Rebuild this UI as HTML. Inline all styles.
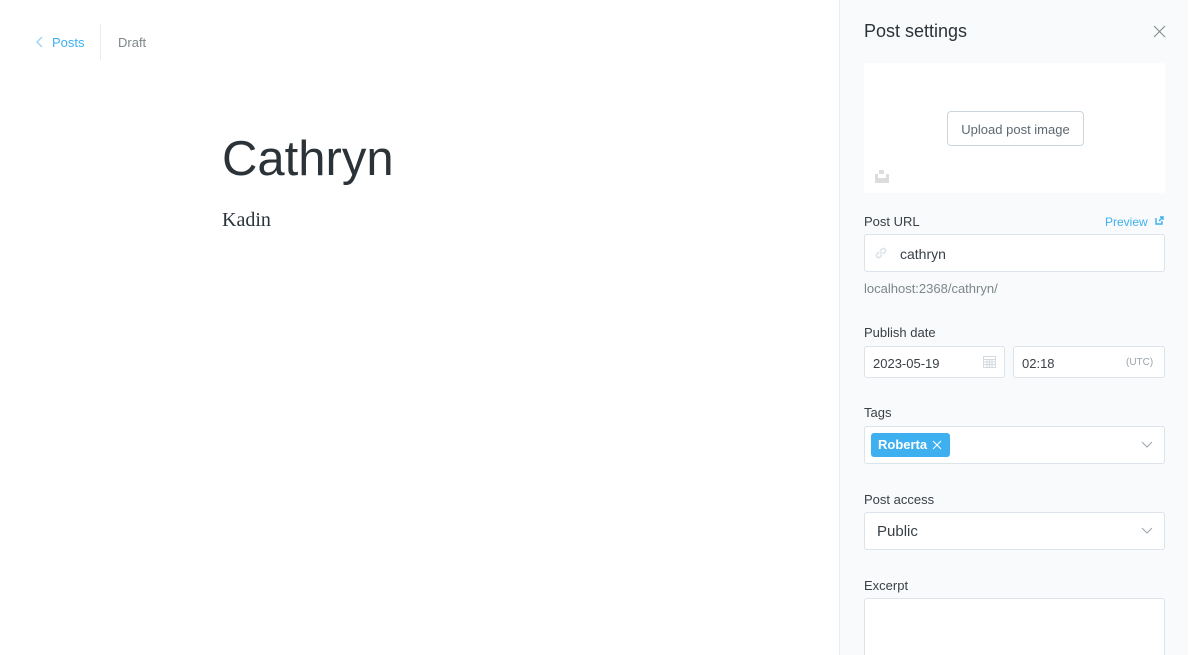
<!DOCTYPE html>
<html><head><meta charset="utf-8"><style>
*{box-sizing:border-box;margin:0;padding:0}
html,body{width:1203px;height:655px;overflow:hidden}
body{background:#fff;font-family:"Liberation Sans","DejaVu Sans",sans-serif;position:relative;color:#394047}
.a{position:absolute}
.lbl{font-size:13px;color:#394047;font-weight:normal}
.inp{background:#fff;border:1px solid #dde3ea;border-radius:3px}
</style></head><body>
<svg class="a" style="left:35px;top:36px" width="10" height="12" viewBox="0 0 10 12"><path d="M7 1L2 6l5 5" fill="none" stroke="#8ccdf2" stroke-width="1.2"/></svg>
<div class="a" style="left:52px;top:35px;font-size:13px;color:#3eb0ef">Posts</div>
<div class="a" style="left:100px;top:24px;width:1px;height:36px;background:#e6ecf1"></div>
<div class="a" style="left:118px;top:35px;font-size:13px;color:#7d878a">Draft</div>
<div class="a" style="left:222px;top:131px;font-size:49px;color:#2b3339">Cathryn</div>
<div class="a" style="left:222px;top:209px;font-size:20px;font-family:'Liberation Serif',serif;color:#2b3339">Kadin</div>

<div class="a" style="left:839px;top:0;width:349px;height:655px;background:#f8fafb;border-left:1px solid #e8edf1"></div>
<div class="a" style="left:864px;top:21px;font-size:18px;color:#2b3339">Post settings</div>
<svg class="a" style="left:1153px;top:25px" width="13" height="13" viewBox="0 0 13 13"><path d="M1 1l11 11M12 1L1 12" stroke="#7d878a" stroke-width="1"/></svg>
<div class="a" style="left:864px;top:63px;width:301px;height:130px;background:#fff;border-radius:3px"></div>
<div class="a" style="left:947px;top:111px;width:137px;height:35px;border:1px solid #ccd5dd;border-radius:4px;background:#fff;font-size:13px;color:#5d6870;text-align:center;line-height:35px">Upload post image</div>
<div class="a" style="left:875px;top:174px;width:14px;height:9px;background:#dcdcdc"></div>
<div class="a" style="left:879px;top:170px;width:5px;height:5px;background:#dcdcdc"></div>
<div class="a" style="left:878px;top:174px;width:8px;height:4px;background:#fff"></div>

<div class="a lbl" style="left:864px;top:214px">Post URL</div>
<div class="a" style="left:1105px;top:215px;font-size:12px;color:#3eb0ef">Preview</div>
<svg class="a" style="left:1155px;top:216px" width="9" height="9" viewBox="0 0 9 9"><path d="M1 2v6h6V5M4 5l4-4M5 1h3v3" fill="none" stroke="#3eb0ef" stroke-width="1.4"/></svg>
<div class="a inp" style="left:864px;top:234px;width:301px;height:38px"></div>
<svg class="a" style="left:874px;top:246px" width="14" height="14" viewBox="0 0 14 14"><path d="M6 8l2-2M5 6L3 8a2 2 0 0 0 3 3l2-2M9 8l2-2a2 2 0 0 0-3-3L6 5" fill="none" stroke="#dde3ea" stroke-width="1.6"/></svg>
<div class="a" style="left:900px;top:246px;font-size:14px;color:#394047">cathryn</div>
<div class="a" style="left:864px;top:281px;font-size:13px;color:#7d878a">localhost:2368/cathryn/</div>

<div class="a lbl" style="left:864px;top:325px">Publish date</div>
<div class="a inp" style="left:864px;top:346px;width:141px;height:32px"></div>
<div class="a" style="left:873px;top:356px;font-size:13px;color:#394047">2023-05-19</div>
<svg class="a" style="left:983px;top:355px" width="13" height="13" viewBox="0 0 13 13"><rect x="0.5" y="1.5" width="12" height="11" fill="none" stroke="#d5dadf"/><path d="M1 4.5h11M1 7h11M1 9.5h11M4 4v8M6.5 4v8M9 4v8" stroke="#d5dadf"/></svg>
<div class="a inp" style="left:1013px;top:346px;width:152px;height:32px"></div>
<div class="a" style="left:1022px;top:356px;font-size:13px;color:#394047">02:18</div>
<div class="a" style="left:1126px;top:357px;font-size:10px;color:#9aa4ab">(UTC)</div>

<div class="a lbl" style="left:864px;top:405px">Tags</div>
<div class="a inp" style="left:864px;top:426px;width:301px;height:38px"></div>
<div class="a" style="left:871px;top:433px;width:79px;height:24px;background:#3eb0ef;border-radius:3px;color:#fff;font-size:13px;font-weight:bold;line-height:24px;padding-left:7px">Roberta</div>
<svg class="a" style="left:932px;top:440px" width="10" height="10" viewBox="0 0 10 10"><path d="M1 1l8 8M9 1L1 9" stroke="#fff" stroke-width="1.1"/></svg>
<svg class="a" style="left:1141px;top:441px" width="12" height="8" viewBox="0 0 12 8"><path d="M1 1l5 5 5-5" fill="none" stroke="#9aa4ab" stroke-width="1"/></svg>

<div class="a lbl" style="left:864px;top:492px">Post access</div>
<div class="a inp" style="left:864px;top:512px;width:301px;height:38px"></div>
<div class="a" style="left:877px;top:523px;font-size:15px;color:#394047">Public</div>
<svg class="a" style="left:1141px;top:527px" width="12" height="8" viewBox="0 0 12 8"><path d="M1 1l5 5 5-5" fill="none" stroke="#9aa4ab" stroke-width="1"/></svg>

<div class="a lbl" style="left:864px;top:578px">Excerpt</div>
<div class="a inp" style="left:864px;top:598px;width:301px;height:57px;border-bottom:none;border-radius:3px 3px 0 0"></div>
</body></html>
